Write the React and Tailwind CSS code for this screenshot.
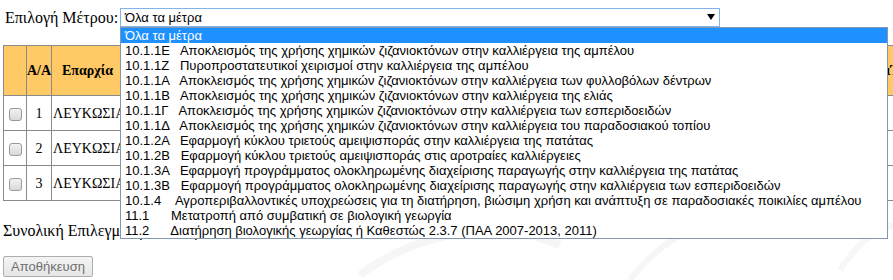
import React from 'react';

const measures = [
    ['10.1.1Ε', '   ', 'Αποκλεισμός της χρήσης χημικών ζιζανιοκτόνων στην καλλιέργεια της αμπέλου'],
    ['10.1.1Ζ', '   ', 'Πυροπροστατευτικοί χειρισμοί στην καλλιέργεια της αμπέλου'],
    ['10.1.1Α', '   ', 'Αποκλεισμός της χρήσης χημικών ζιζανιοκτόνων στην καλλιέργεια των φυλλοβόλων δέντρων'],
    ['10.1.1Β', '   ', 'Αποκλεισμός της χρήσης χημικών ζιζανιοκτόνων στην καλλιέργεια της ελιάς'],
    ['10.1.1Γ', '   ', 'Αποκλεισμός της χρήσης χημικών ζιζανιοκτόνων στην καλλιέργεια των εσπεριδοειδών'],
    ['10.1.1Δ', '   ', 'Αποκλεισμός της χρήσης χημικών ζιζανιοκτόνων στην καλλιέργεια του παραδοσιακού τοπίου'],
    ['10.1.2Α', '   ', 'Εφαρμογή κύκλου τριετούς αμειψισποράς στην καλλιέργεια της πατάτας'],
    ['10.1.2Β', '   ', 'Εφαρμογή κύκλου τριετούς αμειψισποράς στις αροτραίες καλλιέργειες'],
    ['10.1.3Α', '   ', 'Εφαρμογή προγράμματος ολοκληρωμένης διαχείρισης παραγωγής στην καλλιέργεια της πατάτας'],
    ['10.1.3Β', '   ', 'Εφαρμογή προγράμματος ολοκληρωμένης διαχείρισης παραγωγής στην καλλιέργεια των εσπεριδοειδών'],
    ['10.1.4', '    ', 'Αγροπεριβαλλοντικές υποχρεώσεις για τη διατήρηση, βιώσιμη χρήση και ανάπτυξη σε παραδοσιακές ποικιλίες αμπέλου'],
    ['11.1', '      ', 'Μετατροπή από συμβατική σε βιολογική γεωργία'],
    ['11.2', '      ', 'Διατήρηση βιολογικής γεωργίας ή Καθεστώς 2.3.7 (ΠΑΑ 2007-2013, 2011)'],
];

const rows = [1, 2, 3];

const serif = "font-['Liberation_Serif','Times_New_Roman',serif]";
const sans = "font-['Liberation_Sans',Arial,sans-serif]";

const Checkbox = () => (
    <span className="inline-block w-[13px] h-[13px] rounded-[3px] border border-[#9a9a9a] bg-gradient-to-b from-[#f2f2f2] to-[#d9d9d9] align-middle" />
);

const App = () => {
    return (
        <div className="relative w-[893px] h-[280px] overflow-hidden bg-white text-black">
            {/* faint watermark */}
            <svg className="absolute left-[300px] top-[150px]" width="593" height="130" viewBox="0 0 593 130" fill="none">
                <path d="M60 125 C120 80 200 70 260 95" stroke="#f6f6f6" strokeWidth="8" />
                <path d="M330 130 C360 90 400 70 450 60" stroke="#f6f6f6" strokeWidth="6" />
                <path d="M540 120 C560 90 575 80 593 75" stroke="#f7f7f7" strokeWidth="6" />
            </svg>

            <div className="relative pl-[3px] pt-[8px]">
                {/* selector row */}
                <div className="flex items-center h-[19px]">
                    <span className={`${serif} text-[16px] leading-[19px] w-[117px] pl-[2px] whitespace-nowrap`}>Επιλογή Μέτρου:</span>
                    <div className={`${sans} w-[600px] h-[19px] border border-[#7eb4ea] flex items-center justify-between pl-[4px] pr-[4px] text-[13px]`}>
                        <span>Όλα τα μέτρα</span>
                        <svg width="8" height="6" viewBox="0 0 8 6" className="mb-[1px]">
                            <path d="M0 0 H8 L4 6 Z" fill="#000" />
                        </svg>
                    </div>
                </div>

                {/* table */}
                <table className={`${serif} mt-[18px] w-[1000px] table-fixed border-collapse text-[14px]`}>
                    <colgroup>
                        <col className="w-[23px]" />
                        <col className="w-[25px]" />
                        <col className="w-[72px]" />
                        <col className="w-[700px]" />
                        <col />
                    </colgroup>
                    <thead>
                        <tr className="h-[50px] bg-[#ffc966]">
                            <th className="border border-[#8a8a8a]"></th>
                            <th className="border border-[#8a8a8a] font-bold px-0">A/A</th>
                            <th className="border border-[#8a8a8a] font-bold">Επαρχία</th>
                            <th className="border border-[#8a8a8a] font-bold">Μέτρο</th>
                            <th className="border border-[#8a8a8a] font-bold text-left pl-[62px]">ιΈκταση</th>
                        </tr>
                    </thead>
                    <tbody>
                        {rows.map((n) => (
                            <tr key={n} className="h-[35px]">
                                <td className="border border-[#8a8a8a] text-center">
                                    <Checkbox />
                                </td>
                                <td className="border border-[#8a8a8a] text-center">{n}</td>
                                <td className="border border-[#8a8a8a] pl-[1px] whitespace-nowrap overflow-hidden">ΛΕΥΚΩΣΙΑ</td>
                                <td className="border border-[#8a8a8a]"></td>
                                <td className="border border-[#8a8a8a]"></td>
                            </tr>
                        ))}
                    </tbody>
                </table>

                <p className={`${serif} mt-[21px] text-[16px] leading-[18px]`}>Συνολική Επιλεγμένη Έκταση:</p>

                <button
                    disabled
                    className={`${sans} mt-[16px] w-[90px] h-[21px] border border-[#adadad] rounded-[2px] bg-gradient-to-b from-[#f4f4f4] to-[#e6e6e6] text-[13px] text-[#6f6f6f] leading-none`}
                >
                    Αποθήκευση
                </button>
            </div>

            {/* open select list */}
            <div className={`${sans} absolute left-[120px] top-[27px] w-[768px] h-[212px] border border-[#8497b0] bg-white text-[13px] leading-[15px]`}>
                <div className="bg-[#1e90ff] text-white pl-[4px] h-[15px]">Όλα τα μέτρα</div>
                {measures.map(([code, gap, text]) => (
                    <div key={code} className="pl-[4px] whitespace-pre h-[15px]">
                        {code}
                        {gap}
                        {text}
                    </div>
                ))}
            </div>
        </div>
    );
};

export default App;
